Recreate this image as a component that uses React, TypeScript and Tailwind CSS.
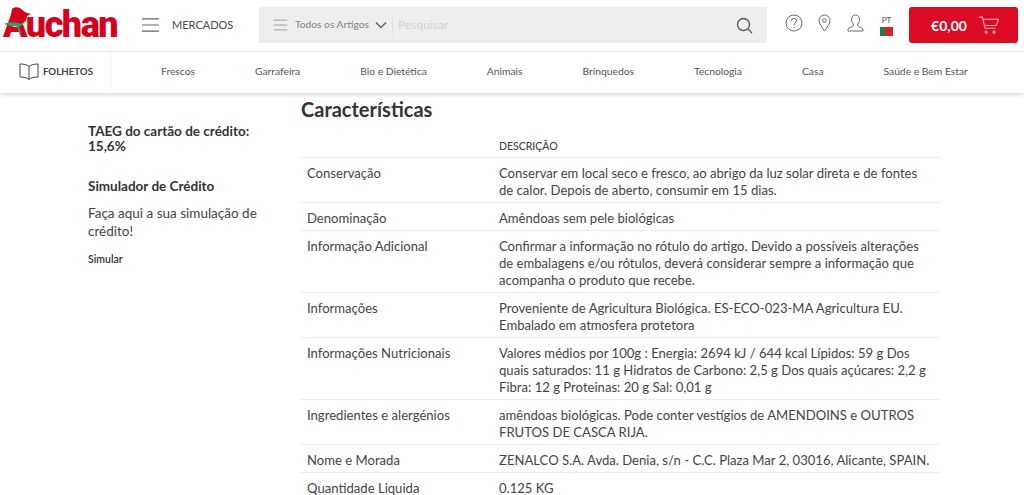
const rows: [string, string[]][] = [
  ["Conservação", ["Conservar em local seco e fresco, ao abrigo da luz solar direta e de fontes", "de calor. Depois de aberto, consumir em 15 dias."]],
  ["Denominação", ["Amêndoas sem pele biológicas"]],
  ["Informação Adicional", ["Confirmar a informação no rótulo do artigo. Devido a possíveis alterações", "de embalagens e/ou rótulos, deverá considerar sempre a informação que", "acompanha o produto que recebe."]],
  ["Informações", ["Proveniente de Agricultura Biológica. ES-ECO-023-MA Agricultura EU.", "Embalado em atmosfera protetora"]],
  ["Informações Nutricionais", ["Valores médios por 100g : Energia: 2694 kJ / 644 kcal Lípidos: 59 g Dos", "quais saturados: 11 g Hidratos de Carbono: 2,5 g Dos quais açúcares: 2,2 g", "Fibra: 12 g Proteinas: 20 g Sal: 0,01 g"]],
  ["Ingredientes e alergénios", ["amêndoas biológicas. Pode conter vestígios de AMENDOINS e OUTROS", "FRUTOS DE CASCA RIJA."]],
  ["Nome e Morada", ["ZENALCO S.A. Avda. Denia, s/n - C.C. Plaza Mar 2, 03016, Alicante, SPAIN."]],
  ["Quantidade Liquida", ["0.125 KG"]],
];

const navItems = ["Frescos", "Garrafeira", "Bio e Dietética", "Animais", "Brinquedos", "Tecnologia", "Casa", "Saúde e Bem Estar"];

function Burger({ className }: { className: string }) {
  return (
    <svg className={className} viewBox="0 0 20 16" fill="none" stroke="currentColor" strokeWidth="1.2">
      <path d="M1 1.500h18M1 8h18M1 14.500h18" />
    </svg>
  );
}

export default function App() {
  return (
    <div className="h-[495px] overflow-hidden bg-white font-['Lato',sans-serif] text-[#3c3c3c]">
      {/* Top bar */}
      <header className="flex h-[52px] items-center border-b border-[#ececec] pb-px">
        <div className="relative ml-[3px] h-[40px] w-[122px] shrink-0">
          <span className="font-['Roboto',sans-serif] text-[36px] leading-[40px] font-black tracking-[-1.5px] text-[#d6001c]">Auchan</span>
          <svg className="absolute top-[-5px] left-[-3px] h-[40px] w-[40px]" viewBox="0 0 40 40">
            <path d="M12 9C15 6 20 7 23 10.500c2 2 5 3 8 3.500l-4 2c0 4-2 6.500-5 7.500-5 1-9 0-12-1z" fill="#d6001c" />
            <path d="M4 24c4-2 10-2.500 14-1 3 1 5.500 0 7-2.500-1 3.500-3 5.500-6 6l2.500 7h-2l-2.500-7c-5 0-9-1-13-2.500z" fill="#2f9d6a" />
          </svg>
        </div>
        <Burger className="ml-[16px] h-[16px] w-[19px] text-[#666]" />
        <span className="ml-[12px] w-[60px] text-[11px] whitespace-nowrap text-[#4a4a4a]">MERCADOS</span>
        <div className="ml-[27px] flex h-[36px] w-[508px] items-center bg-[#eeeeee] pr-[14px] pl-[14px]">
          <Burger className="h-[14px] w-[15px] text-[#999]" />
          <span className="ml-[7px] w-[74px] text-[10.200px] font-medium whitespace-nowrap text-[#8a8a8a]">Todos os Artigos</span>
          <svg className="ml-[6px] h-[8px] w-[12px] text-[#666]" viewBox="0 0 12 8" fill="none" stroke="currentColor" strokeWidth="1.5">
            <path d="M1 1.500l5 5 5-5" />
          </svg>
          <div className="ml-[5px] h-[20px] w-px bg-[#e2e2e2]" />
          <span className="ml-[5px] flex-1 text-[12px] text-[#d2d2d2]">Pesquisar</span>
          <svg className="h-[17px] w-[17px] text-[#555]" viewBox="0 0 17 17" fill="none" stroke="currentColor" strokeWidth="1.3">
            <circle cx="7.500" cy="7.500" r="6" />
            <path d="M12 12l4 4" />
          </svg>
        </div>
        <svg className="mt-[-4px] ml-[18px] h-[18px] w-[18px] text-[#666]" viewBox="0 0 18 18" fill="none" stroke="currentColor" strokeWidth="1">
          <circle cx="9" cy="9" r="8" />
          <path d="M6.500 7c0-1.500 1-2.600 2.500-2.600s2.500 1 2.500 2.300c0 2-2.500 2.200-2.500 4.300" />
          <path d="M9 13v1" />
        </svg>
        <svg className="mt-[-4px] ml-[15px] h-[18px] w-[13px] text-[#666]" viewBox="0 0 13 18" fill="none" stroke="currentColor" strokeWidth="1">
          <path d="M6.500 17C4 13 1 10 1 6.500a5.500 5.500 0 0 1 11 0C12 10 9 13 6.500 17z" />
          <circle cx="6.500" cy="6.500" r="1.800" />
        </svg>
        <svg className="mt-[-4px] ml-[16px] h-[18px] w-[17px] text-[#666]" viewBox="0 0 17 18" fill="none" stroke="currentColor" strokeWidth="1">
          <path d="M8.500 1C6 1 4.500 3 4.500 5.500c0 2 1 3.500 2 4.500 0 1.500-.5 2.500-2 3-2 .6-3.500 1.500-3.500 2.500v1.500h15v-1.500c0-1-1.500-1.900-3.500-2.500-1.500-.5-2-1.500-2-3 1-1 2-2.500 2-4.500C12.500 3 11 1 8.500 1z" />
        </svg>
        <div className="ml-[16px] flex w-[13px] flex-col items-center">
          <span className="text-[8px] leading-[10px] text-[#555]">PT</span>
          <div className="mt-[2px] flex h-[9px] w-[13px]">
            <div className="w-[5px] bg-[#1f7a4d]" />
            <div className="flex-1 bg-[#d8232f]" />
          </div>
        </div>
        <button className="ml-[16px] flex h-[36px] w-[109px] items-center justify-center gap-[12px] rounded-[3px] bg-[#dc0a23] pl-[3px] text-[14px] font-bold text-white">
          €0,00
          <svg className="h-[19px] w-[20px] text-[#ffb0b8]" viewBox="0 0 18 17" fill="none" stroke="currentColor" strokeWidth="1">
            <path d="M0 1h3l2.500 10h9.500M3.500 3h14l-2 5.500H5" />
            <circle cx="6.500" cy="14.500" r="1" />
            <circle cx="13.500" cy="14.500" r="1" />
          </svg>
        </button>
      </header>

      {/* Category nav */}
      <nav className="relative flex h-[41px] items-center pb-[2px] shadow-[0_2px_4px_rgba(0,0,0,0.15)]">
        <div className="flex h-full w-[111px] items-center justify-end border-r border-[#f3f3f3] pr-[17px]">
          <svg className="h-[17px] w-[20px] text-[#444]" viewBox="0 0 20 17" fill="none" stroke="currentColor" strokeWidth="1">
            <path d="M10 3.500C8 1.500 4 1 1 1v13c3 0 7 .5 9 2.500 2-2 6-2.500 9-2.500V1c-3 0-7 .5-9 2.500zM10 3.500v13" />
          </svg>
          <span className="ml-[4px] text-[9.700px] font-bold text-[#444]">FOLHETOS</span>
        </div>
        <div className="flex flex-1 gap-[60px] pl-[50px] text-[10.300px] whitespace-nowrap text-[#555]">
          {navItems.map((item) => (
            <span key={item}>{item}</span>
          ))}
        </div>
      </nav>

      {/* Body */}
      <div className="flex">
        <aside className="w-[301px] shrink-0 pt-[31px] pr-[30px] pl-[88px]">
          <p className="text-[13.500px] leading-[15px] font-bold text-[#333]">TAEG do cartão de crédito: 15,6%</p>
          <p className="mt-[23px] text-[13.500px] leading-[18px] font-bold text-[#333]">Simulador de Crédito</p>
          <p className="mt-[9px] text-[13.500px] leading-[18px] text-[#444]">Faça aqui a sua simulação de crédito!</p>
          <p className="mt-[12px] text-[10.500px] leading-[14px] font-semibold text-[#333]">Simular</p>
        </aside>
        <main className="w-[639px]">
          <h2 className="mt-[4px] text-[20px] leading-[24px] font-bold text-[#333]">Características</h2>
          <div className="mt-[16px] flex h-[21px] items-center border-b border-[#ececec] pl-[198px] text-[10.500px] font-medium text-[#444]">DESCRIÇÃO</div>
          {rows.map(([label, lines]) => (
            <div key={label} className="flex border-b border-[#ececec] pt-[7px] pb-[3px] text-[13.100px] leading-[17px] text-[#444]">
              <div className="w-[198px] shrink-0 pl-[6px]">{label}</div>
              <div className="whitespace-nowrap">
                {lines.map((line) => (
                  <div key={line}>{line}</div>
                ))}
              </div>
            </div>
          ))}
        </main>
      </div>
    </div>
  );
}
